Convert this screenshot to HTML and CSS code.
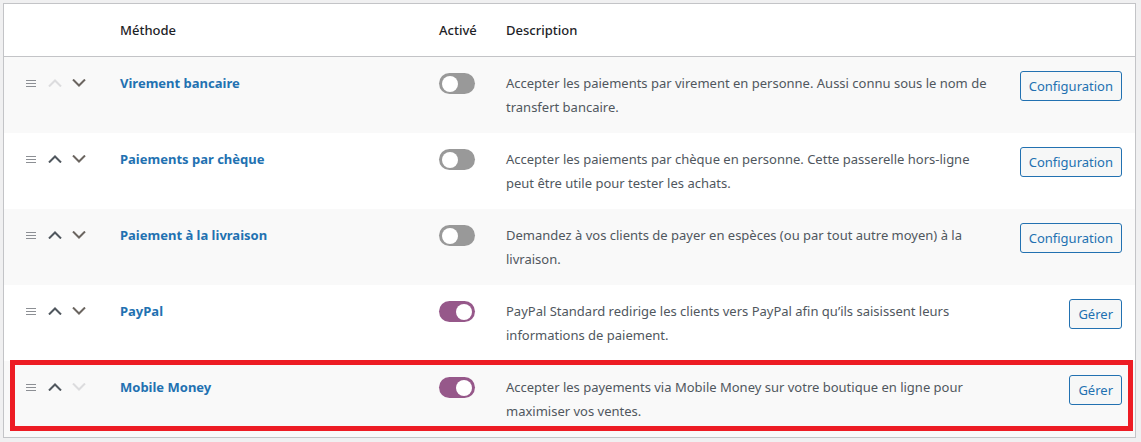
FILE: index.html
```html
<!DOCTYPE html>
<html lang="fr">
<head>
<meta charset="utf-8">
<title>Méthodes de paiement</title>
<link rel="stylesheet" href="styles.css">
</head>
<body>
<div class="table">
  <div class="row head">
    <div class="c-sort"></div>
    <div class="c-name">Méthode</div>
    <div class="c-toggle">Activé</div>
    <div class="c-desc">Description</div>
    <div class="c-action"></div>
  </div>

  <div class="row alt">
    <div class="c-sort">
      <span class="handle"><i></i><i></i><i></i></span>
      <svg class="chev off" viewBox="0 0 14 8"><polyline points="1,7.5 7,1.5 13,7.5"/></svg>
      <svg class="chev down" viewBox="0 0 14 8"><polyline points="1,0.5 7,6.5 13,0.5"/></svg>
    </div>
    <div class="c-name"><a href="#">Virement bancaire</a></div>
    <div class="c-toggle"><span class="switch"></span></div>
    <div class="c-desc">Accepter les paiements par virement en personne. Aussi connu sous le nom de transfert bancaire.</div>
    <div class="c-action"><button class="btn">Configuration</button></div>
  </div>

  <div class="row">
    <div class="c-sort">
      <span class="handle"><i></i><i></i><i></i></span>
      <svg class="chev" viewBox="0 0 14 8"><polyline points="1,7.5 7,1.5 13,7.5"/></svg>
      <svg class="chev down" viewBox="0 0 14 8"><polyline points="1,0.5 7,6.5 13,0.5"/></svg>
    </div>
    <div class="c-name"><a href="#">Paiements par chèque</a></div>
    <div class="c-toggle"><span class="switch"></span></div>
    <div class="c-desc">Accepter les paiements par chèque en personne. Cette passerelle hors-ligne peut être utile pour tester les achats.</div>
    <div class="c-action"><button class="btn">Configuration</button></div>
  </div>

  <div class="row alt">
    <div class="c-sort">
      <span class="handle"><i></i><i></i><i></i></span>
      <svg class="chev" viewBox="0 0 14 8"><polyline points="1,7.5 7,1.5 13,7.5"/></svg>
      <svg class="chev down" viewBox="0 0 14 8"><polyline points="1,0.5 7,6.5 13,0.5"/></svg>
    </div>
    <div class="c-name"><a href="#">Paiement à la livraison</a></div>
    <div class="c-toggle"><span class="switch"></span></div>
    <div class="c-desc">Demandez à vos clients de payer en espèces (ou par tout autre moyen) à la livraison.</div>
    <div class="c-action"><button class="btn">Configuration</button></div>
  </div>

  <div class="row">
    <div class="c-sort">
      <span class="handle"><i></i><i></i><i></i></span>
      <svg class="chev" viewBox="0 0 14 8"><polyline points="1,7.5 7,1.5 13,7.5"/></svg>
      <svg class="chev down" viewBox="0 0 14 8"><polyline points="1,0.5 7,6.5 13,0.5"/></svg>
    </div>
    <div class="c-name"><a href="#">PayPal</a></div>
    <div class="c-toggle"><span class="switch on"></span></div>
    <div class="c-desc">PayPal Standard redirige les clients vers PayPal afin qu’ils saisissent leurs informations de paiement.</div>
    <div class="c-action"><button class="btn">Gérer</button></div>
  </div>

  <div class="row alt last">
    <div class="c-sort">
      <span class="handle"><i></i><i></i><i></i></span>
      <svg class="chev" viewBox="0 0 14 8"><polyline points="1,7.5 7,1.5 13,7.5"/></svg>
      <svg class="chev off" viewBox="0 0 14 8"><polyline points="1,0.5 7,6.5 13,0.5"/></svg>
    </div>
    <div class="c-name"><a href="#">Mobile Money</a></div>
    <div class="c-toggle"><span class="switch on"></span></div>
    <div class="c-desc">Accepter les payements via Mobile Money sur votre boutique en ligne pour maximiser vos ventes.</div>
    <div class="c-action"><button class="btn">Gérer</button></div>
    <div class="highlight"></div>
  </div>
</div>
</body>
</html>
```

FILE: styles.css
```css
* { box-sizing: border-box; }

html, body {
  margin: 0;
  background: #f0f0f1;
}

body {
  padding: 3px 5px 0 3px;
  font-family: "Noto Sans", "Segoe UI", sans-serif;
  font-size: 13px;
  color: #50575e;
}

.table {
  background: #fff;
  border: 1px solid #c3c4c7;
  width: 1133px;
}

.row {
  display: grid;
  grid-template-columns: 116px 319px 67px 500px 1fr;
  align-items: start;
  padding: 14px 13px 14px 0;
  line-height: 24px;
  position: relative;
}

.row.alt { background: #f9f9f9; }

.row.head {
  height: 53px;
  padding-top: 14px;
  padding-bottom: 0;
  border-bottom: 1px solid #c3c4c7;
  color: #1d2327;
  font-weight: 500;
}

.row.head .c-toggle { padding-top: 0; }

.c-sort {
  display: flex;
  align-items: center;
  padding-left: 22px;
  height: 24px;
}

.handle {
  display: flex;
  flex-direction: column;
  gap: 2px;
  width: 10px;
  margin-right: 12px;
}

.handle i {
  display: block;
  height: 1px;
  background: #8c8f94;
}

.chev {
  width: 14px;
  height: 8px;
  margin-right: 10px;
  fill: none;
  stroke: #50575e;
  stroke-width: 2;
}

.chev.down { stroke: #6b6560; }
.chev.off { stroke: #dcdcde; }

.c-name a {
  color: #2271b1;
  font-weight: 700;
  text-decoration: none;
}

.c-toggle {
  padding-top: 2px;
}

.switch {
  display: block;
  position: relative;
  width: 36px;
  height: 21px;
  border-radius: 11px;
  background: #999;
}

.switch::after {
  content: "";
  position: absolute;
  left: 3px;
  top: 2.5px;
  width: 16px;
  height: 16px;
  border-radius: 50%;
  background: #fff;
}

.switch.on { background: #96588a; }
.switch.on::after { left: 17px; }

.c-desc { padding-right: 6px; }

.c-action {
  display: flex;
  justify-content: flex-end;
}

.btn {
  height: 30px;
  padding: 0 8px;
  border: 1px solid #2271b1;
  border-radius: 3px;
  background: #f6f7f7;
  color: #2271b1;
  font-family: inherit;
  font-size: 13px;
  line-height: 28px;
  cursor: pointer;
}

.highlight {
  position: absolute;
  left: 6px;
  right: 2px;
  top: -1px;
  height: 71px;
  border: 5px solid #ed1c24;
  pointer-events: none;
}
```
